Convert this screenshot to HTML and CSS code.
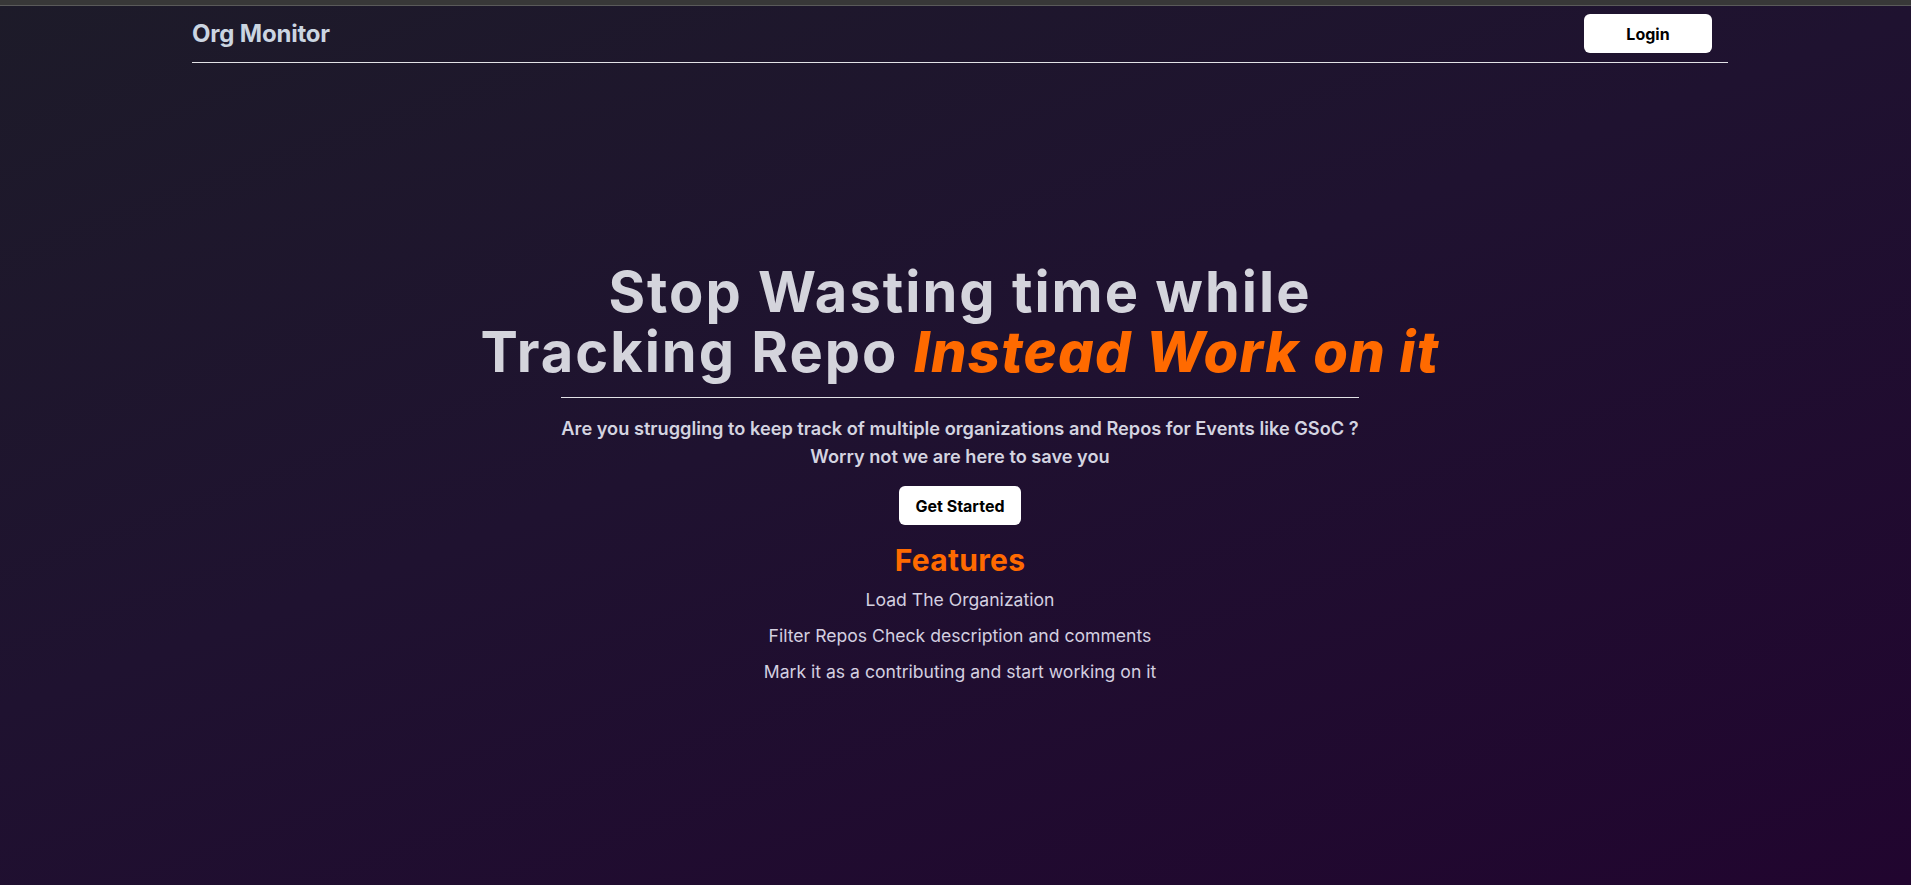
FILE: index.html
```html
<!DOCTYPE html>
<html lang="en">
<head>
<meta charset="utf-8">
<title>Org Monitor</title>
<link rel="stylesheet" href="styles.css">
</head>
<body>
<div class="page">
  <div class="chrome"></div>
  <header class="topbar">
    <div class="brand">Org Monitor</div>
    <button class="btn btn-login">Login</button>
  </header>
  <main class="hero">
    <div class="hero-inner">
      <h1 class="title">Stop Wasting time while<br>Tracking Repo <em class="accent">Instead Work on it</em></h1>
      <div class="lede">
        <hr class="rule">
        <p class="lede-text">Are you struggling to keep track of multiple organizations and Repos for Events like GSoC ?<br>Worry not we are here to save you</p>
      </div>
      <button class="btn btn-start">Get Started</button>
      <h2 class="features-title">Features</h2>
      <ul class="features">
        <li>Load The Organization</li>
        <li>Filter Repos Check description and comments</li>
        <li>Mark it as a contributing and start working on it</li>
      </ul>
    </div>
  </main>
</div>
</body>
</html>
```

FILE: styles.css
```css
html, body {
  margin: 0;
  padding: 0;
  height: 100%;
  overflow: hidden;
}
body {
  font-family: Inter, "Noto Sans", sans-serif;
  background: linear-gradient(160deg, #1d1b29 0%, #1f1230 45%, #21052f 100%);
  color: #d1d5db;
}
.page {
  width: 1920px;
  height: 885px;
  display: flex;
  flex-direction: column;
}
.chrome {
  height: 5px;
  background: #383838;
  border-bottom: 1px solid #5a5a5a;
  flex: none;
}
.topbar {
  width: 1536px;
  margin: 0 auto;
  box-sizing: border-box;
  display: flex;
  align-items: center;
  justify-content: space-between;
  padding: 8px 16px 9px 0;
  border-bottom: 1px solid #e2e2e6;
  flex: none;
}
.brand {
  font-size: 24px;
  font-weight: 700;
  color: #cbd5e1;
  letter-spacing: -0.2px;
}
.btn {
  font-family: Inter, "Noto Sans", sans-serif;
  background: #ffffff;
  color: #000;
  border: none;
  border-radius: 6px;
  font-weight: 700;
  cursor: pointer;
}
.btn-login {
  width: 128px;
  height: 39px;
  font-size: 16px;
}
.hero {
  flex: 1;
  display: flex;
  align-items: center;
  justify-content: center;
}
.hero-inner {
  display: flex;
  flex-direction: column;
  align-items: center;
  text-align: center;
}
.title {
  margin: 0;
  font-size: 56px;
  line-height: 60px;
  font-weight: 700;
  letter-spacing: 2px;
  color: #d4d4dc;
}
.accent {
  color: #ff6a00;
  font-style: italic;
  font-weight: 800;
  letter-spacing: 1.3px;
}
.lede {
  width: fit-content;
  margin-top: 15px;
}
.rule {
  margin: 0;
  border: none;
  border-top: 1px solid #e2e2e6;
  height: 0;
}
.lede-text {
  margin: 16px 0 0;
  font-size: 18.2px;
  line-height: 28px;
  font-weight: 600;
  color: #d4d4e0;
}
.btn-start {
  margin-top: 16px;
  height: 39px;
  padding: 0 16px;
  font-size: 16px;
}
.features-title {
  margin: 17px 0 0;
  font-size: 30px;
  line-height: 36px;
  font-weight: 700;
  letter-spacing: 0.3px;
  color: #ff6a00;
}
.features {
  list-style: none;
  margin: 0;
  padding: 0;
}
.features li {
  margin-top: 8px;
  font-size: 17.6px;
  line-height: 28px;
  color: #d4d0e0;
}
```
